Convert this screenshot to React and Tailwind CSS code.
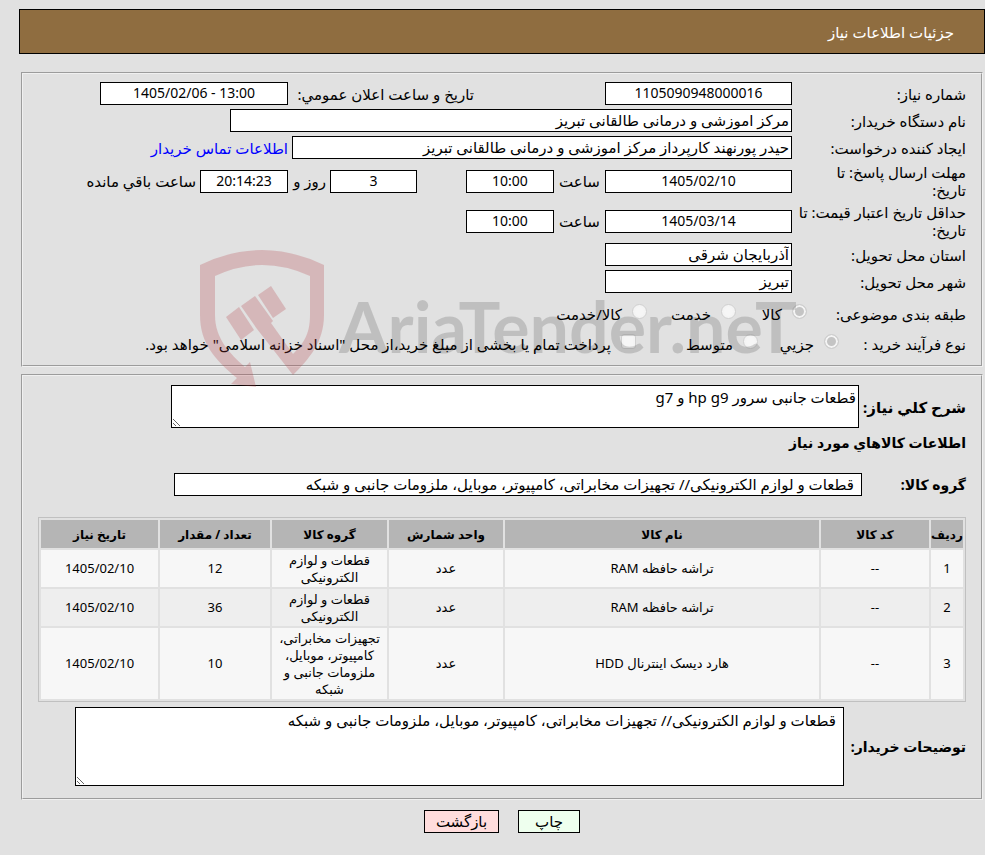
import React from "react";

const field = "h-[23px] border border-black bg-white px-[2px] pb-[2px] leading-[20px] text-black outline-none";

function Field({ id, value, className, ...rest }) {
  return <input id={id} type="text" readOnly defaultValue={value} className={`${field} ${className}`} {...rest} />;
}

function Row({ id, label, children }) {
  return (
    <div className="flex items-center">
      <label htmlFor={id} className="w-[174px] shrink-0 leading-[18px] whitespace-nowrap">
        {label}
      </label>
      {children}
    </div>
  );
}

function Choice({ id, type = "radio", name, label, checked, className }) {
  const shape = type === "radio" ? "rounded-full" : "rounded-[3px]";
  const fill = checked ? "bg-[#c4c4c4]" : "bg-[#f6f6f6]";
  return (
    <div className={`flex items-start gap-[10px] ${className}`}>
      <input
        id={id}
        type={type}
        name={name}
        defaultChecked={checked}
        disabled
        className={`size-[15px] shrink-0 appearance-none border border-[#cfcfcf] shadow-[inset_0_0_0_2px_#f4f4f4] ${shape} ${fill}`}
      />
      <label htmlFor={id} className="whitespace-nowrap">
        {label}
      </label>
    </div>
  );
}

const rows = [
  { name: "تراشه حافظه RAM", group: "قطعات و لوازم الکترونیکی", count: "12" },
  { name: "تراشه حافظه RAM", group: "قطعات و لوازم الکترونیکی", count: "36" },
  { name: "هارد دیسک اینترنال HDD", group: "تجهیزات مخابراتی، کامپیوتر، موبایل، ملزومات جانبی و شبکه", count: "10" },
];

const columns = [
  ["ردیف", "w-[32px]"],
  ["کد کالا", "w-[108px]"],
  ["نام کالا", ""],
  ["واحد شمارش", "w-[114px]"],
  ["گروه کالا", "w-[115px]"],
  ["تعداد / مقدار", "w-[110px]"],
  ["تاریخ نیاز", "w-[117px]"],
];

const groupText = "قطعات و لوازم الکترونیکی// تجهیزات مخابراتی، کامپیوتر، موبایل، ملزومات جانبی و شبکه";
const panel = "border-2 [border-style:groove] border-[#f0f0f0] px-[15px]";

function Watermark() {
  return (
    <div
      aria-hidden="true"
      dir="ltr"
      className="pointer-events-none absolute top-[178px] left-[179px] flex items-start gap-[15px]"
    >
      <svg viewBox="200 250 124 138" className="h-[138px] w-[124px] fill-[#b53d45]/25">
        <path d="M200 265Q262 235 324 265V315C324 342 309 359 293 375L257 329L241 306L255 296L273 321L271 323L293 354C303 344 310 335 310 315V276Q262 254 215 276V315C215 338 229 353 245 367L250 362L256 387L231 384L237 378C215 360 200 343 200 315Z" />
        <path d="M226 317L239 307L254 330L241 340ZM258 295L271 286L286 309L273 318Z" />
      </svg>
      <span className="mt-[36px] font-['Lato',sans-serif] text-[70px] leading-[80px] font-bold text-black/15">
        AriaTender.neT
      </span>
    </div>
  );
}

export default function App() {
  return (
    <main
      dir="rtl"
      lang="fa"
      className="min-h-screen bg-[#e1e1e1] pt-[9px] pb-[22px] pl-[19px] font-['Noto_Sans','DejaVu_Sans',sans-serif] text-[15px] leading-[20px] text-black"
    >
      <header className="flex h-[45px] items-center border border-black bg-[#8f6d40] pr-[30px] text-white">
        <h1>جزئیات اطلاعات نیاز</h1>
      </header>

      <div className="relative mx-[2px] mt-[18px]">
        <section className={`${panel} pt-[8px] pb-[11px]`}>
          <div className="flex flex-col gap-1">
            <Row id="number" label="شماره نیاز:">
              <Field id="number" value="1105090948000016" className="w-[187px] text-center text-[14px]" />
              <label htmlFor="announce" className="mr-[131px] w-[186px] whitespace-nowrap">
                تاریخ و ساعت اعلان عمومي:
              </label>
              <Field
                id="announce"
                value="1405/02/06 - 13:00"
                dir="ltr"
                className="w-[188px] text-center text-[14px]"
              />
            </Row>
            <Row id="org" label="نام دستگاه خریدار:">
              <Field id="org" value="مرکز اموزشی و درمانی طالقانی تبریز" className="w-[562px]" />
            </Row>
            <Row id="creator" label="ایجاد کننده درخواست:">
              <Field id="creator" value="حیدر پورنهند کارپرداز مرکز اموزشی و درمانی طالقانی تبریز" className="w-[500px]" />
              <a href="#contact" className="mr-1 text-[#0000ff]">
                اطلاعات تماس خریدار
              </a>
            </Row>
            <Row
              id="deadline"
              label={
                <>
                  مهلت ارسال پاسخ: تا
                  <br />
                  تاریخ:
                </>
              }
            >
              <Field id="deadline" value="1405/02/10" className="w-[187px] text-center text-[14px]" />
              <label htmlFor="deadlineHour" className="w-[51px] text-center">
                ساعت
              </label>
              <Field id="deadlineHour" value="10:00" className="w-[88px] text-center text-[14px]" />
              <Field id="days" value="3" aria-label="روز" className="mr-[49px] w-[87px] text-center text-[14px]" />
              <label htmlFor="days" className="w-[42px] pr-1">
                روز و
              </label>
              <Field id="remaining" value="20:14:23" className="w-[88px] bg-[#fffff0] text-center text-[14px]" />
              <label htmlFor="remaining" className="mr-1 whitespace-nowrap">
                ساعت باقي مانده
              </label>
            </Row>
            <Row
              id="validity"
              label={
                <>
                  حداقل تاریخ اعتبار قیمت: تا
                  <br />
                  تاریخ:
                </>
              }
            >
              <Field id="validity" value="1405/03/14" className="w-[187px] text-center text-[14px]" />
              <label htmlFor="validityHour" className="w-[51px] text-center">
                ساعت
              </label>
              <Field id="validityHour" value="10:00" className="w-[88px] text-center text-[14px]" />
            </Row>
            <Row id="province" label="استان محل تحویل:">
              <Field id="province" value="آذربایجان شرقی" className="w-[187px]" />
            </Row>
            <Row id="city" label="شهر محل تحویل:">
              <Field id="city" value="تبریز" className="w-[187px]" />
            </Row>
          </div>

          <div className="mt-[11px] flex items-start" role="radiogroup" aria-label="طبقه بندی موضوعی">
            <span className="w-[159px] shrink-0">طبقه بندی موضوعی:</span>
            <Choice id="goods" name="subject" label="کالا" checked className="w-[71px]" />
            <Choice id="service" name="subject" label="خدمت" className="w-[89px]" />
            <Choice id="both" name="subject" label="کالا/خدمت" />
          </div>
          <div className="mt-[10px] flex items-start" role="radiogroup" aria-label="نوع فرآیند خرید">
            <span className="w-[127px] shrink-0">نوع فرآیند خرید :</span>
            <Choice id="small" name="process" label="جزيي" checked className="w-[81px]" />
            <Choice id="medium" name="process" label="متوسط" className="w-[122px]" />
            <Choice
              id="treasury"
              type="checkbox"
              name="treasury"
              label={'پرداخت تمام یا بخشی از مبلغ خرید،از محل "اسناد خزانه اسلامی" خواهد بود.'}
            />
          </div>
        </section>

        <section className={`${panel} mt-[7px] pt-[9px] pb-[12px]`}>
          <div className="flex items-center">
            <label htmlFor="summary" className="w-[107px] shrink-0 font-bold whitespace-nowrap">
              شرح کلي نیاز:
            </label>
            <textarea
              id="summary"
              readOnly
              defaultValue="قطعات جانبی سرور hp g9 و g7"
              className="h-[43px] w-[688px] resize border border-black bg-white px-[2px] py-px outline-none"
            />
          </div>
          <h2 className="mt-[5px] text-[14px] leading-[20px] font-bold">اطلاعات کالاهاي مورد نیاز</h2>
          <div className="mt-[20px] flex items-center">
            <label htmlFor="group" className="w-[104px] shrink-0 text-[14px] font-bold">
              گروه کالا:
            </label>
            <Field id="group" value={groupText} className="w-[688px] pr-[7px]" />
          </div>

          <table className="mt-[21px] w-full table-fixed border-separate border-spacing-[2px] border border-[#c0c0c0] text-center text-[13px] leading-[17px]">
            <thead>
              <tr className="h-[28px] bg-[#b5b5b5] text-[12px]">
                {columns.map(([title, width]) => (
                  <th key={title} className={`p-0 whitespace-nowrap ${width}`}>
                    {title}
                  </th>
                ))}
              </tr>
            </thead>
            <tbody>
              {rows.map((r, i) => (
                <tr key={i} className="bg-[#f7f7f7] even:bg-[#eeeeee]">
                  <td>{i + 1}</td>
                  <td>--</td>
                  <td>{r.name}</td>
                  <td>عدد</td>
                  <td className="px-1 pt-[2px] pb-px">{r.group}</td>
                  <td>{r.count}</td>
                  <td>1405/02/10</td>
                </tr>
              ))}
            </tbody>
          </table>

          <div className="mt-[5px] flex items-center">
            <label htmlFor="notes" className="w-[122px] shrink-0 text-[14px] font-bold whitespace-nowrap">
              توضیحات خریدار:
            </label>
            <textarea
              id="notes"
              readOnly
              defaultValue={groupText}
              className="h-[79px] w-[769px] resize border border-black bg-white px-[7px] py-[2px] outline-none"
            />
          </div>
        </section>
        <Watermark />
      </div>

      <div className="mt-[10px] flex justify-center gap-[19px]">
        <button type="button" className="h-[23px] w-[62px] border border-black bg-[#eeffee] pb-[2px]">
          چاپ
        </button>
        <button type="button" className="h-[23px] w-[75px] border border-black bg-[#ffdddd] pb-[2px]">
          بازگشت
        </button>
      </div>
    </main>
  );
}
